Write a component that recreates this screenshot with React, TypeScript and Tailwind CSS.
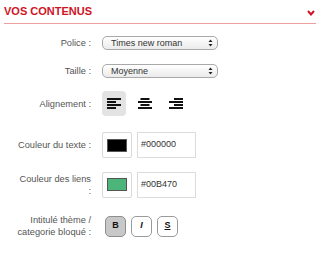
import React from "react";

type RowProps = {
  label: React.ReactNode;
  className?: string;
  children: React.ReactNode;
};

function Row({ label, className = "", children }: RowProps) {
  return (
    <div className={`flex items-center ${className}`}>
      <div className="w-[91px] shrink-0 pl-[15px] text-right text-[9.25px] leading-[12px] text-[#555]">
        {label}
      </div>
      <div className="ml-[11px] flex items-center">{children}</div>
    </div>
  );
}

function FakeSelect({ value }: { value: string }) {
  return (
    <div className="flex h-[14px] w-[116px] items-center justify-between rounded-[5px] border border-[#a9a9a9] bg-gradient-to-b from-white to-[#ebebeb] pl-[8px] pr-[4px] text-[9px] leading-none text-[#333]">
      <span>{value}</span>
      <svg width="5" height="8" viewBox="0 0 5 8">
        <path d="M2.5 0.5 L4.5 3 L0.5 3 Z" fill="#222" />
        <path d="M2.5 7.5 L4.5 5 L0.5 5 Z" fill="#222" />
      </svg>
    </div>
  );
}

function AlignIcon({ kind }: { kind: "left" | "center" | "right" }) {
  const rows = kind === "left" ? [14, 9, 14, 9] : [9, 14, 9, 14];
  return (
    <svg width="14" height="11" viewBox="0 0 14 11">
      {rows.map((w, i) => {
        const x = kind === "left" ? 0 : kind === "center" ? (14 - w) / 2 : 14 - w;
        return <rect key={i} x={x} y={i * 3} width={w} height={2} fill="#111" />;
      })}
    </svg>
  );
}

function ColorField({ color, value }: { color: string; value: string }) {
  return (
    <>
      <div className="flex h-[26px] w-[30px] items-center justify-center rounded-[2px] border border-[#d9d9d9] bg-white">
        <div className="h-[13px] w-[20px] border border-[#555]" style={{ backgroundColor: color }} />
      </div>
      <div className="ml-[5px] flex h-[26px] w-[59px] items-center border border-[#dcdcdc] bg-white pl-[3px] text-[9px] text-[#333]">
        {value}
      </div>
    </>
  );
}

export default function App() {
  return (
    <div className="h-[253px] w-[320px] overflow-hidden bg-white font-['Liberation_Sans',Arial,sans-serif]">
      <div className="mx-1 flex items-start justify-between border-b border-[#ec9f9f] pb-[5px] pt-[4px]">
        <h2 className="text-[11px] font-bold leading-[14px] text-[#cf1426]">VOS CONTENUS</h2>
        <svg className="mr-[1px] mt-[6px]" width="8" height="6" viewBox="0 0 8 6">
          <path d="M1 1 L4 4.5 L7 1" stroke="#cf1426" strokeWidth="2" fill="none" />
        </svg>
      </div>

      <Row label="Police :" className="mt-[12px]">
        <FakeSelect value="Times new roman" />
      </Row>

      <Row label="Taille :" className="mt-[14px]">
        <FakeSelect value="Moyenne" />
      </Row>

      <Row label="Alignement :" className="mt-[13px]">
        <div className="flex gap-[7px]">
          <div className="flex h-[25px] w-[24px] items-center justify-center rounded-[4px] bg-[#e3e3e3]">
            <AlignIcon kind="left" />
          </div>
          <div className="flex h-[25px] w-[24px] items-center justify-center">
            <AlignIcon kind="center" />
          </div>
          <div className="flex h-[25px] w-[24px] items-center justify-center">
            <AlignIcon kind="right" />
          </div>
        </div>
      </Row>

      <Row label="Couleur du texte :" className="mt-[16px]">
        <ColorField color="#000000" value="#000000" />
      </Row>

      <Row label="Couleur des liens :" className="mt-[13px]">
        <div className="flex h-[27px] items-center">
          <ColorField color="#4cb57a" value="#00B470" />
        </div>
      </Row>

      <Row label="Intitulé thème / categorie bloqué :" className="mt-[16px]">
        <div className="ml-[3px] flex gap-[5px] text-[9px] font-bold text-[#111]">
          <div className="flex h-[21px] w-[21px] items-center justify-center rounded-[5px] border border-[#8e8e8e] bg-[#c8c8c8]">
            B
          </div>
          <div className="flex h-[21px] w-[21px] items-center justify-center rounded-[5px] border border-[#9a9a9a] bg-white italic">
            I
          </div>
          <div className="flex h-[21px] w-[21px] items-center justify-center rounded-[5px] border border-[#9a9a9a] bg-white underline">
            S
          </div>
        </div>
      </Row>
    </div>
  );
}
